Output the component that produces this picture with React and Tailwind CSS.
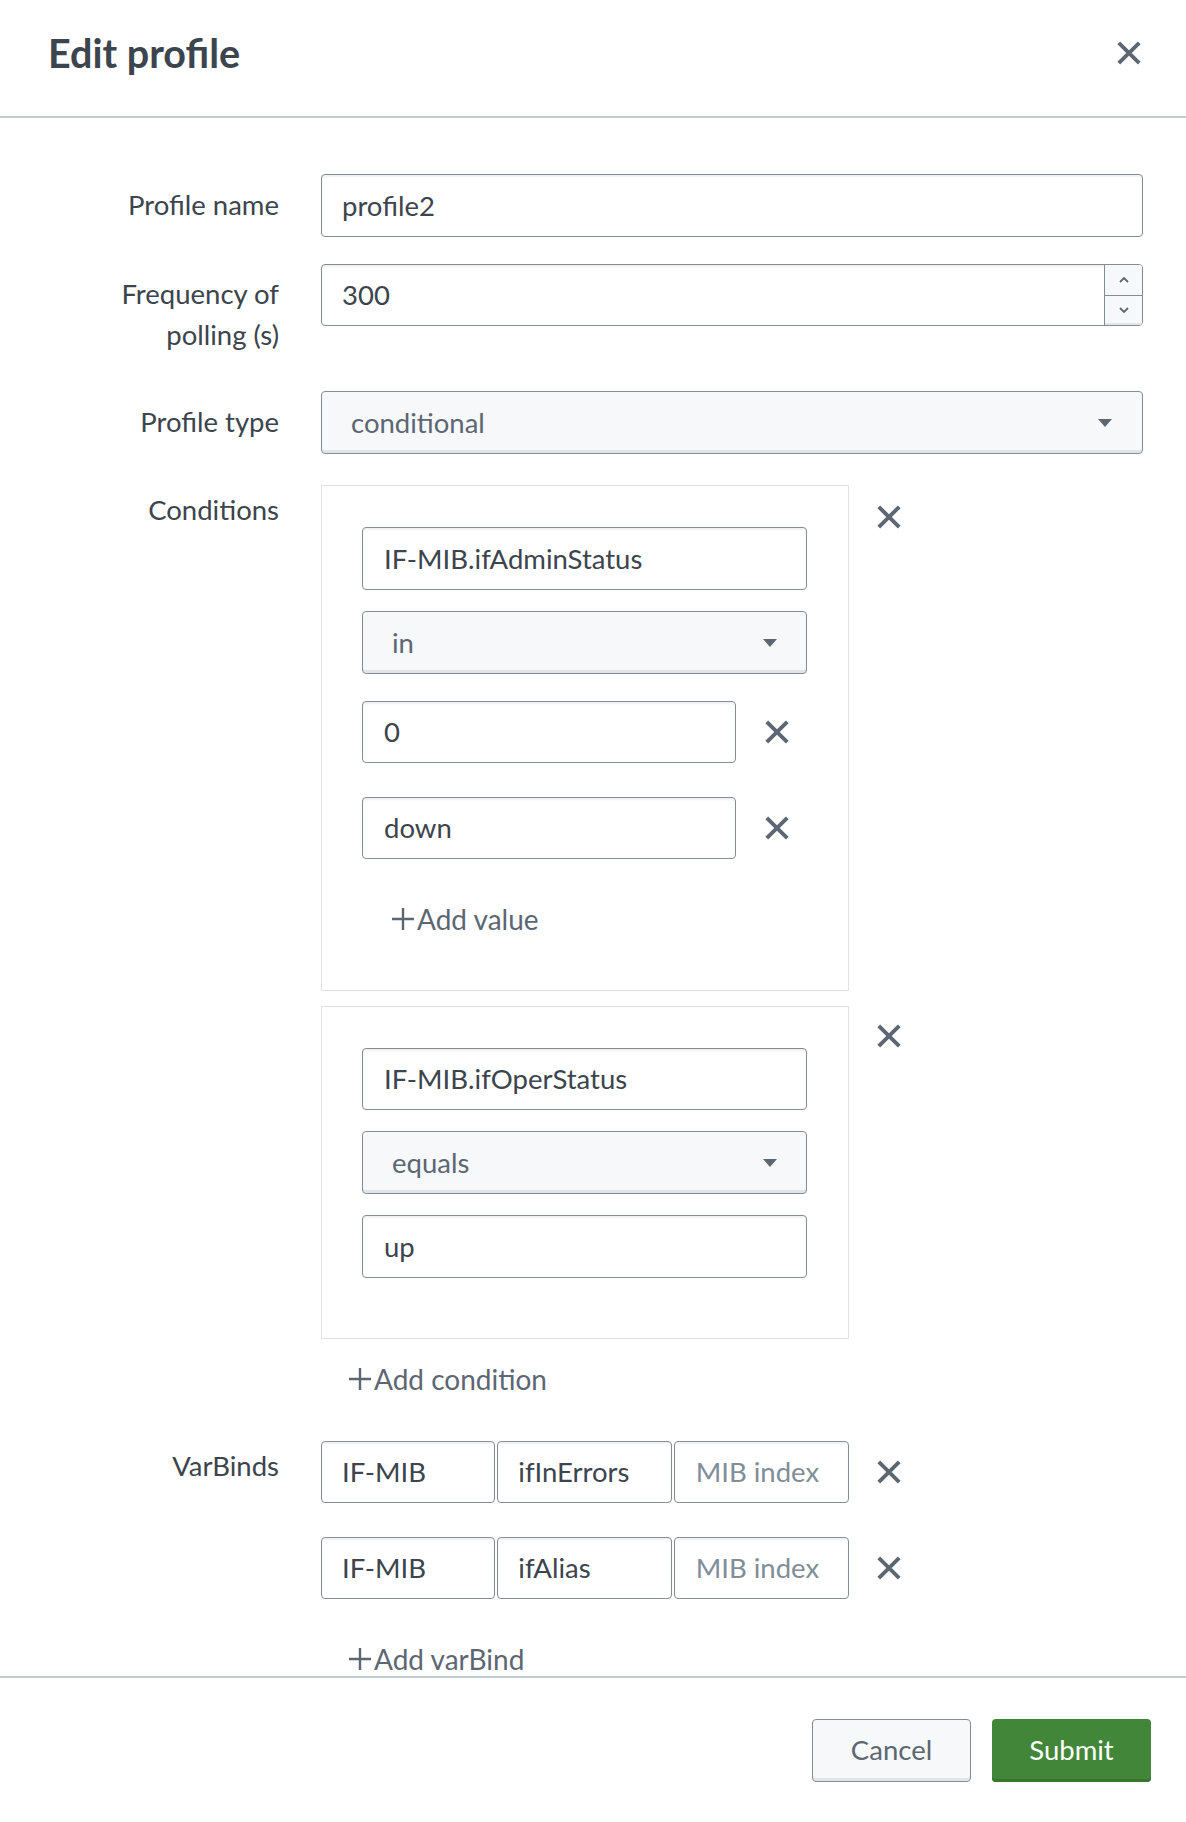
import React from "react";

const FONT = { fontFamily: "Lato, 'Open Sans', sans-serif" };

function XIcon({ size = 26, className = "" }) {
  return (
    <svg width={size} height={size} viewBox="0 0 26 26" className={className}>
      <path d="M3.5 3.5 L22.5 22.5 M22.5 3.5 L3.5 22.5" stroke="#5c6773" strokeWidth="3.6" strokeLinecap="butt" fill="none" />
    </svg>
  );
}

function Caret() {
  return (
    <svg width="14" height="8" viewBox="0 0 14 8">
      <path d="M0 0 L14 0 L7 8 Z" fill="#5c6773" />
    </svg>
  );
}

function Field({ value, placeholder, className = "" }) {
  return (
    <div
      className={
        "flex items-center rounded-[4px] border border-[#818d99] bg-white shadow-[inset_0_2px_2px_rgba(0,0,0,0.06)] " +
        className
      }
    >
      {value ? (
        <span className="text-[#3c444d]">{value}</span>
      ) : (
        <span className="text-[#818d99]">{placeholder}</span>
      )}
    </div>
  );
}

function Select({ value, className = "" }) {
  return (
    <div
      className={
        "flex items-center justify-between rounded-[4px] border border-[#818d99] bg-[#f7f8fa] pl-[29px] pr-[29px] shadow-[inset_0_-3px_0_#e1e4e8] " +
        className
      }
    >
      <span className="text-[#5c6773]">{value}</span>
      <Caret />
    </div>
  );
}

function AddLink({ text, className = "" }) {
  return (
    <div className={"flex h-[40px] items-center text-[#5c6773] " + className}>
      <svg width="26" height="26" viewBox="0 0 26 26" className="mr-[1px]">
        <path d="M13 2 V24 M2 13 H24" stroke="#5c6773" strokeWidth="2.4" fill="none" />
      </svg>
      <span className="text-[28px]">{text}</span>
    </div>
  );
}

export default function App() {
  return (
    <div
      className="flex h-[1822px] w-[1186px] flex-col overflow-hidden bg-white text-[27.5px] leading-[40px] text-[#3c444d]"
      style={FONT}
    >
      {/* Header */}
      <div className="flex h-[118px] shrink-0 items-start justify-between border-b-2 border-[#c3cbd4] pl-[48px] pr-[43px] pt-[29px]">
        <h1 className="text-[39.5px] font-bold leading-[48px] text-[#3c444d]">Edit profile</h1>
        <XIcon size={28} className="mt-[10px]" />
      </div>

      {/* Body */}
      <div className="flex-1 overflow-hidden pr-[43px] pt-[56px]">
        {/* Profile name */}
        <div className="flex gap-[42px]">
          <div className="w-[279px] shrink-0 pt-[11px] text-right">Profile name</div>
          <Field value="profile2" className="h-[63px] flex-1 pl-[20px]" />
        </div>

        {/* Frequency */}
        <div className="mt-[27px] flex gap-[42px]">
          <div className="w-[279px] shrink-0 pt-[9px] text-right leading-[41px]">
            Frequency of
            <br />
            polling (s)
          </div>
          <div className="flex h-[62px] flex-1 items-stretch overflow-hidden rounded-[4px] border border-[#818d99] bg-white shadow-[inset_0_2px_2px_rgba(0,0,0,0.06)]">
            <div className="flex flex-1 items-center pl-[20px]">300</div>
            <div className="flex w-[38px] flex-col border-l border-[#818d99] bg-[#f7f8fa]">
              <div className="flex flex-1 items-center justify-center border-b border-[#818d99]">
                <svg width="10" height="6" viewBox="0 0 10 6">
                  <path d="M1 5 L5 1 L9 5" stroke="#5c6773" strokeWidth="1.8" fill="none" />
                </svg>
              </div>
              <div className="flex flex-1 items-center justify-center shadow-[inset_0_-2px_0_#e1e4e8]">
                <svg width="10" height="6" viewBox="0 0 10 6">
                  <path d="M1 1 L5 5 L9 1" stroke="#5c6773" strokeWidth="1.8" fill="none" />
                </svg>
              </div>
            </div>
          </div>
        </div>

        {/* Profile type */}
        <div className="mt-[36px] flex gap-[42px]">
          <div className="w-[279px] shrink-0 pt-[11px] text-right">Profile type</div>
          <Select value="conditional" className="h-[63px] flex-1 !pr-[30px]" />
        </div>

        {/* Conditions */}
        <div className="mt-[31px] flex gap-[42px]">
          <div className="w-[279px] shrink-0 pt-[5px] text-right">Conditions</div>
          <div className="flex flex-1 flex-col">
            {/* Condition 1 */}
            <div className="flex items-start">
              <div className="w-[528px] border border-[#dfe3e8] pb-[51px] pl-[40px] pt-[41px]">
                <Field value="IF-MIB.ifAdminStatus" className="h-[63px] w-[445px] pl-[21px]" />
                <Select value="in" className="mt-[21px] h-[63px] w-[445px]" />
                <div className="mt-[27px] flex items-center gap-[27px]">
                  <Field value="0" className="h-[62px] w-[374px] pl-[21px]" />
                  <XIcon size={28} />
                </div>
                <div className="mt-[34px] flex items-center gap-[27px]">
                  <Field value="down" className="h-[62px] w-[374px] pl-[21px]" />
                  <XIcon size={28} />
                </div>
                <AddLink text="Add value" className="mt-[40px] pl-[28px]" />
              </div>
              <XIcon size={28} className="ml-[26px] mt-[18px]" />
            </div>

            {/* Condition 2 */}
            <div className="mt-[15px] flex items-start">
              <div className="w-[528px] border border-[#dfe3e8] pb-[60px] pl-[40px] pt-[41px]">
                <Field value="IF-MIB.ifOperStatus" className="h-[62px] w-[445px] pl-[21px]" />
                <Select value="equals" className="mt-[21px] h-[63px] w-[445px]" />
                <Field value="up" className="mt-[21px] h-[63px] w-[445px] pl-[21px]" />
              </div>
              <XIcon size={28} className="ml-[26px] mt-[16px]" />
            </div>

            <AddLink text="Add condition" className="mt-[20px] pl-[26px]" />
          </div>
        </div>

        {/* VarBinds */}
        <div className="mt-[42px] flex gap-[42px]">
          <div className="w-[279px] shrink-0 pt-[5px] text-right">VarBinds</div>
          <div className="flex flex-1 flex-col">
            <div className="flex items-center">
              <div className="flex w-[528px] gap-[2px]">
                <Field value="IF-MIB" className="h-[62px] flex-1 pl-[20px]" />
                <Field value="ifInErrors" className="h-[62px] flex-1 pl-[20px]" />
                <Field placeholder="MIB index" className="h-[62px] flex-1 pl-[21px]" />
              </div>
              <XIcon size={28} className="ml-[26px]" />
            </div>
            <div className="mt-[34px] flex items-center">
              <div className="flex w-[528px] gap-[2px]">
                <Field value="IF-MIB" className="h-[62px] flex-1 pl-[20px]" />
                <Field value="ifAlias" className="h-[62px] flex-1 pl-[20px]" />
                <Field placeholder="MIB index" className="h-[62px] flex-1 pl-[21px]" />
              </div>
              <XIcon size={28} className="ml-[26px]" />
            </div>
            <AddLink text="Add varBind" className="mt-[40px] pl-[26px]" />
          </div>
        </div>
      </div>

      {/* Footer */}
      <div className="flex h-[146px] shrink-0 items-center justify-end gap-[21px] border-t-2 border-[#c3cbd4] pr-[35px]">
        <button className="flex h-[63px] w-[159px] items-center justify-center rounded-[4px] border border-[#818d99] bg-[#f7f8fa] text-[#5c6773] shadow-[inset_0_-3px_0_#e1e4e8]">
          Cancel
        </button>
        <button className="flex h-[63px] w-[159px] items-center justify-center rounded-[4px] bg-[#42863a] text-white shadow-[inset_0_-3px_0_#3a7632]">
          Submit
        </button>
      </div>
    </div>
  );
}
